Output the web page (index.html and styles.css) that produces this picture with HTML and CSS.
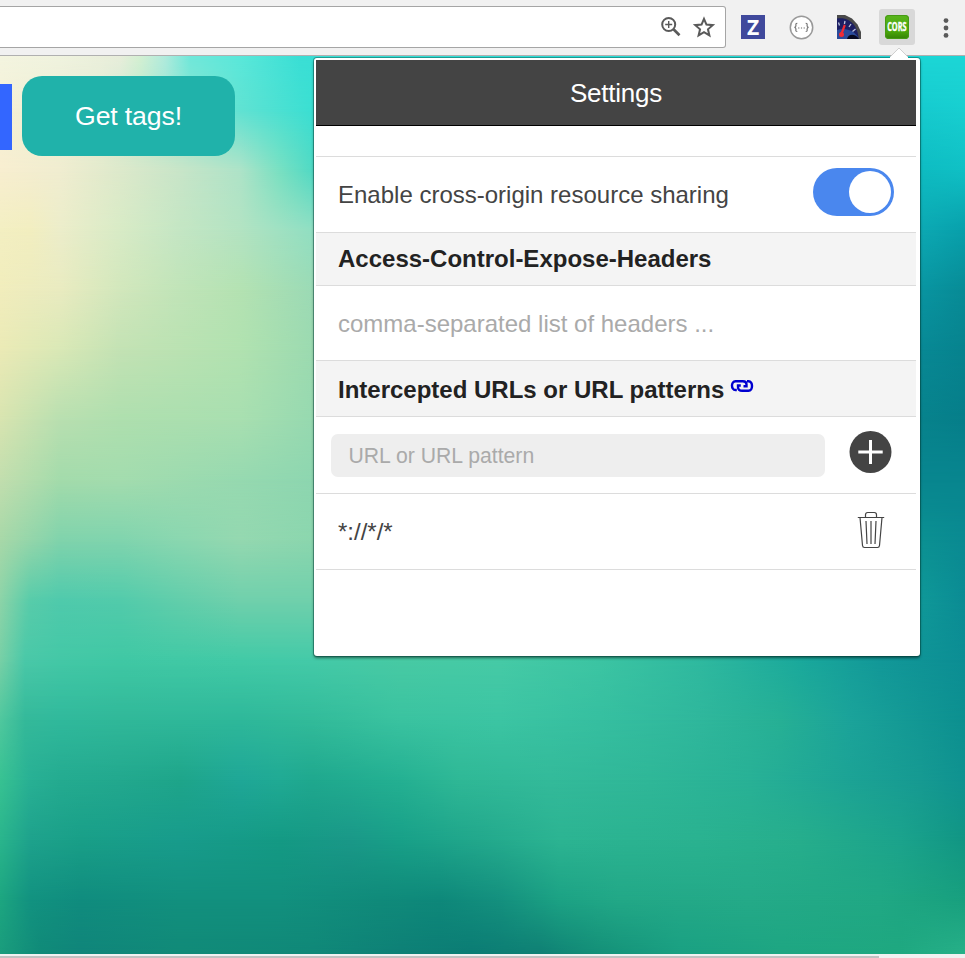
FILE: index.html
```
<!DOCTYPE html>
<html lang="en">
<head>
<meta charset="utf-8">
<title>Settings</title>
<link rel="stylesheet" href="styles.css">
</head>
<body>
<header class="toolbar">
  <div class="address">
    <svg class="ic-zoom" width="22" height="22" viewBox="0 0 22 22" fill="none" stroke="#5a5a5a"><circle cx="8.7" cy="8.5" r="6.5" stroke-width="2"/><path d="M13.5 13.3l6 6" stroke-width="2.7"/><path d="M8.7 5v7M5.2 8.5h7" stroke-width="1.4"/></svg>
    <svg class="ic-star" width="22" height="22" viewBox="0 0 22 22" fill="none" stroke="#5a5a5a" stroke-width="2"><path d="M11 2.800l2.450 5.800 6.300.55-4.800 4.100 1.450 6.150L11 16.150 5.600 19.400l1.450-6.150-4.800-4.100 6.300-.55z"/></svg>
  </div>
  <span class="ext ext-z">Z</span>
  <svg class="ext-braces" width="25" height="25" viewBox="0 0 25 25"><circle cx="12.500" cy="12.500" r="11.200" fill="#fff" stroke="#999" stroke-width="1.500"/><g fill="none" stroke="#777" stroke-width="1.200"><path d="M8.300 8.300c-2 0-1.300 1.200-1.400 2.500 0 1-.4 1.500-1.500 1.600 1.100.1 1.500.6 1.500 1.600.1 1.300-.6 2.500 1.400 2.500M16.700 8.300c2 0 1.300 1.200 1.400 2.500 0 1 .4 1.500 1.500 1.600-1.100.1-1.500.6-1.500 1.600-.1 1.300.6 2.500-1.400 2.500"/></g><g fill="#888"><circle cx="9.800" cy="13" r=".7"/><circle cx="12.500" cy="13" r=".7"/><circle cx="15.200" cy="13" r=".7"/></g></svg>
  <svg class="ext-gauge" width="24" height="24" viewBox="0 0 24 24"><path d="M0 0h8l7 3.500 5.500 6L24 17v7H0z" fill="#4a4a4a"/><path d="M0 3.500C13 1 21.500 12 21.500 24H0z" fill="#1c1f63"/><path d="M0 15c8-3 18 0 22 9H0z" fill="#2a4b9b"/><path d="M10 24c1-5 8-6 12 0z" fill="#07091f"/><g stroke="#bcc4df" stroke-width="1.300"><path d="M1.500 7.500l1 3M8 6l-.6 3M14 9l-2 3M18.500 14l-3 2.500"/></g><path d="M7.800 10L4 20" stroke="#f02b35" stroke-width="2.200"/><circle cx="4.500" cy="19.500" r="2.500" fill="#f02b35"/></svg>
  <span class="active-ext"><span class="ext ext-cors"><svg width="24" height="24" viewBox="0 0 24 24"><text transform="translate(2.200 16.200) scale(.61 1)">CORS</text></svg></span></span>
  <svg class="ic-menu" width="6" height="20" viewBox="0 0 6 20" fill="#5a5a5a"><circle cx="3" cy="2.600" r="2.400"/><circle cx="3" cy="10" r="2.400"/><circle cx="3" cy="17.400" r="2.400"/></svg>
</header>
<main class="page">
  <div class="mesh">
    <i class="m m1"></i><i class="m m2"></i><i class="m m3"></i><i class="m m4"></i><i class="m m5"></i><i class="m m6"></i><i class="m m7"></i><i class="m m8"></i><i class="m m9"></i><i class="m m10"></i><i class="m m11"></i><i class="m m12"></i><i class="m m13"></i><i class="m m14"></i><i class="m m15"></i><i class="m m16"></i>
  </div>
  <div class="content">
    <div class="blue"></div>
    <button class="tags"><span class="t-tags">Get tags!</span></button>
  </div>
</main>
<div class="scroll"><div class="thumb"></div></div>
<section class="popup">
  <svg class="arrow" width="20" height="11" viewBox="0 0 20 11"><path d="M1 10L10 1l9 9v1H1z" fill="#fff"/><path d="M1 10L10 1l9 9" fill="none" stroke="#c4c4c4" stroke-width=".8"/></svg>
  <div class="panel">
    <h1><span class="t-settings">Settings</span></h1>
    <div class="row spacer"></div>
    <div class="row enable"><span class="t-enable">Enable cross-origin resource sharing</span><span class="toggle"><span class="knob"></span></span></div>
    <h2 class="row head1"><span class="t-head1">Access-Control-Expose-Headers</span></h2>
    <div class="row expose"><span class="t-expose">comma-separated list of headers ...</span></div>
    <h2 class="row head2"><span class="t-head2">Intercepted URLs or URL patterns</span><svg class="link" width="24" height="14" viewBox="0 0 24 14" fill="none" stroke="#0000d0" stroke-width="2.400"><path d="M6.800 11H5.500C.8 11 .8 2.200 5.500 2.200h7.300q3.700 0 3.700 3.200v1.800h-3"/><path d="M17 2.200h1.500c4.700 0 4.700 9.600 0 9.600h-6.300q-4.200 0-4.200-3.800V6.500h2.800"/></svg></h2>
    <div class="row add"><div class="field"><span class="t-url">URL or URL pattern</span></div><svg class="plus" width="44" height="44" viewBox="0 0 44 44"><circle cx="22.500" cy="22" r="21" fill="#444"/><path d="M22.500 10v24M10.300 22h24.400" stroke="#fff" stroke-width="3"/></svg></div>
    <div class="row item"><span class="t-item">*://*/*</span><svg class="trash" width="28" height="38" viewBox="0 0 28 38" fill="none" stroke="#444" stroke-width="1.200"><path d="M.8 6.500h26.400M8.500 6.500V3.700q0-2.200 2.200-2.200h6.600q2.200 0 2.200 2.200v2.800"/><path d="M3 6.500l2.500 28q.2 2 2 2h13q1.800 0 2-2l2.500-28M9 10l1 23M14 10v23M19 10l-1 23"/></svg></div>
  </div>
</section>
</body>
</html>
```
FILE: styles.css
```
* { box-sizing: border-box; }
body {
  margin: 0;
  width: 965px;
  height: 958px;
  overflow: hidden;
  position: relative;
  display: flex;
  flex-direction: column;
  font-family: "Liberation Sans", Arial, sans-serif;
}
svg { display: block; flex: none; overflow: visible; }
h1, h2 { margin: 0; }

.toolbar {
  height: 56px;
  flex: none;
  display: flex;
  align-items: flex-start;
  background: #f1f1f1;
  border-bottom: 1px solid #b0b0b0;
}
.address {
  width: 726px;
  height: 42px;
  margin-top: 6px;
  display: flex;
  justify-content: flex-end;
  padding: 9px 10px 0 0;
  gap: 11px;
  background: #fff;
  border: 1px solid #a5a5a5;
  border-left: 0;
  border-radius: 0 3px 3px 0;
}
.ext { display: block; width: 24px; height: 24px; margin-top: 15px; }
.ext-z {
  margin-left: 15px;
  background: #40499c;
  color: #fff;
  font: bold 21px/24px "Open Sans", sans-serif;
  text-align: center;
}
.ext-braces { margin: 15px 0 0 24px; }
.ext-gauge { margin: 15px 0 0 23px; }
.active-ext {
  width: 36px;
  height: 36px;
  margin: 9px 0 0 18px;
  padding: 6px;
  background: #d8d8d8;
  border-radius: 3px;
}
.ext-cors {
  margin: 0;
  border-radius: 4px;
  background: linear-gradient(#58b51c, #4aa50a 70%, #338006);
  box-shadow: inset 0 0 0 1px #469a14;
}
.ext-cors text { font: bold 12px "Open Sans", sans-serif; fill: #fff; stroke: #fff; stroke-width: .4px; }
.ic-menu { margin: 18px 0 0 28px; }

.page { height: 898px; flex: none; display: grid; }
.mesh, .content { grid-area: 1 / 1; }
.mesh { display: grid; }
.m {
  grid-area: 1 / 1;
  -webkit-mask-image: linear-gradient(transparent var(--a), #000 var(--b));
  mask-image: linear-gradient(transparent var(--a), #000 var(--b));
}
.m1 { -webkit-mask-image: none; mask-image: none; background: linear-gradient(90deg, #f4f5e0 0, #f0f3df 60px, #e8eedb 120px, #d4f0d2 140px, #b0ebdd 165px, #70e8da 190px, #5ae8da 240px, #3adfd5 300px, #1cd6d6 920px); }
.m2 { --a: 0px; --b: 54px; background: linear-gradient(90deg, #f5f1d6 0, #e4ecd2 100px, #90e5d0 180px, #60e2d2 240px, #3adfd2 313px, #16cbcf 925px, #18cfd0 965px); }
.m3 { --a: 54px; --b: 114px; background: linear-gradient(90deg, #f8eed0 0, #f0edd0 60px, #dde9cb 120px, #c8e5c8 180px, #aee3c8 240px, #78e0c2 280px, #50d9c4 313px, #0ebcc2 925px, #10c0c5 965px); }
.m4 { --a: 114px; --b: 174px; background: linear-gradient(90deg, #f3efc2 0, #f2eec0 30px, #ecedca 60px, #d8ebc6 120px, #c4e6c4 180px, #b3e3c2 240px, #90dfc2 313px, #0ca8b2 925px, #08a0ab 965px); }
.m5 { --a: 174px; --b: 234px; background: linear-gradient(90deg, #f1edbc 0, #e9ebc0 60px, #d2e7bc 120px, #c0e4b8 180px, #b4e2b2 240px, #9bdab5 313px, #0994a0 925px, #088b96 965px); }
.m6 { --a: 234px; --b: 294px; background: linear-gradient(90deg, #ebeab6 0, #d9e8b6 60px, #c3e2b4 120px, #b1e2b0 240px, #9bdab0 313px, #088894 925px, #07838e 965px); }
.m7 { --a: 294px; --b: 364px; background: linear-gradient(90deg, #d8e4b0 0, #b8dfb0 60px, #aedfae 120px, #a8dfb0 240px, #96d9b0 313px, #07828c 925px, #067e8a 965px); }
.m8 { --a: 364px; --b: 424px; background: linear-gradient(90deg, #c2deae 0, #a3dbab 60px, #a3dcae 120px, #96d9b0 240px, #8dd6b0 313px, #08868f 925px, #08868f 965px); }
.m9 { --a: 424px; --b: 484px; background: linear-gradient(90deg, #a8d8a8 0, #80d3ac 60px, #80d4ae 120px, #8ad7b0 180px, #94d8b0 240px, #8bd6ae 313px, #0b9092 925px, #0a8a92 965px); }
.m10 { --a: 484px; --b: 544px; background: linear-gradient(90deg, #8dd4a8 0, #58ccaa 30px, #4fcaac 60px, #52cbab 120px, #62ceab 180px, #70d0ac 240px, #70d0ac 313px, #0f9798 925px, #0b8c94 965px); }
.m11 { --a: 544px; --b: 604px; background: linear-gradient(90deg, #78d0a6 0, #4ac8a8 25px, #44c8a6 60px, #40c8a4 120px, #42caa6 240px, #44caa8 313px, #48caa4 400px, #46caa6 500px, #3cc5a3 600px, #2fb99f 700px, #1aa99c 800px, #129898 880px, #0c8e94 965px); }
.m12 { --a: 604px; --b: 664px; background: linear-gradient(90deg, #50c89e 0, #34b99a 25px, #30b99c 60px, #30b899 120px, #2eb89a 240px, #32bb9a 313px, #3ac3a0 400px, #3cc5a3 500px, #36bfa0 600px, #2fb79c 700px, #26b095 780px, #1ba39a 850px, #129794 920px, #0c9090 965px); }
.m13 { --a: 664px; --b: 724px; background: linear-gradient(90deg, #38c292 0, #28b094 30px, #24ab90 60px, #22a88e 120px, #1ea58a 180px, #1fa797 240px, #20aa94 280px, #1fa88e 313px, #24b092 400px, #2fb896 460px, #33ba9a 550px, #2fb798 650px, #28b196 750px, #1ca395 850px, #169a92 920px, #0f9290 965px); }
.m14 { --a: 724px; --b: 784px; background: linear-gradient(90deg, #2ab58c 0, #1ea28c 30px, #199f88 80px, #189c8c 180px, #149a84 280px, #1a9888 350px, #18a088 400px, #22a88c 480px, #2cb492 560px, #2ab290 700px, #26ae8c 800px, #1ba38c 900px, #119684 965px); }
.m15 { --a: 784px; --b: 844px; background: linear-gradient(90deg, #1da680 0, #129280 30px, #108c7e 80px, #12907e 180px, #12907e 280px, #108a7a 380px, #0e887a 440px, #14907e 500px, #1ca284 560px, #22a887 620px, #24aa88 750px, #20a884 880px, #18a07e 965px); }
.m16 { --a: 844px; --b: 898px; background: linear-gradient(90deg, #1a9c7c 0, #108a78 40px, #10857a 80px, #118a78 180px, #108878 313px, #0e8076 400px, #0b7c74 470px, #0f8074 540px, #149078 600px, #1aa082 680px, #1ea682 780px, #1fa880 900px, #27b088 965px); }

.content { display: flex; align-items: flex-start; gap: 10px; padding-top: 20px; z-index: 1; }
.blue { width: 12px; height: 66px; margin-top: 8px; background: #3366ff; }
.tags {
  width: 213px;
  height: 80px;
  padding: 0;
  border: 0;
  border-radius: 20px;
  background: #20b2aa;
  color: #fff;
  font: 26.670px/80px "Liberation Sans", Arial, sans-serif;
  letter-spacing: -.15px;
}
.scroll { height: 4px; flex: none; padding-top: 2px; background: #f1f1f1; }
.thumb { width: 879px; height: 2px; background: #c1c1c1; }

.popup {
  position: absolute;
  left: 314px;
  top: 58px;
  width: 606px;
  height: 598px;
  padding: 2px 4px 0 2px;
  background: #fff;
  border-radius: 3px;
  box-shadow: 0 0 0 1px rgba(0, 70, 60, .42), 0 2px 3px rgba(0, 0, 0, .5);
}
.arrow { position: absolute; left: 575px; top: -11px; }
.panel { display: flex; flex-direction: column; color: #444; font-size: 24px; }
h1 {
  height: 66px;
  background: #444;
  border-bottom: 1px solid #000;
  color: #fff;
  font-size: 26px;
  font-weight: normal;
  letter-spacing: -.22px;
  line-height: 66px;
  text-align: center;
}
.row {
  display: flex;
  align-items: center;
  padding-left: 22px;
  border-bottom: 1px solid #dcdcdc;
}
.spacer { height: 31px; }
.enable { height: 76px; justify-content: space-between; padding-right: 22px; }
.toggle {
  width: 81px;
  height: 48px;
  margin-bottom: 5px;
  padding: 3px;
  display: flex;
  justify-content: flex-end;
  border-radius: 24px;
  background: #4a87ee;
}
.knob { width: 42px; height: 42px; border-radius: 50%; background: #fff; }
h2.row { background: #f4f4f4; color: #222; font-size: 24px; font-weight: bold; }
.head1 { height: 53px; }
.expose { height: 75px; padding-top: 2px; color: #aaa; }
.head2 { height: 56px; padding-top: 2px; }
.link { margin: 0 0 7px 6px; }
.add { height: 77px; padding-left: 15px; }
.field {
  width: 494px;
  height: 43px;
  padding-left: 17.500px;
  border-radius: 7px;
  background: #eee;
  color: #aaa;
  font-size: 21.200px;
  line-height: 44px;
}
.plus { margin: 0 0 6px 23px; }
.item { height: 76px; justify-content: space-between; padding-right: 31px; }
.trash { margin-bottom: 4px; }
```
